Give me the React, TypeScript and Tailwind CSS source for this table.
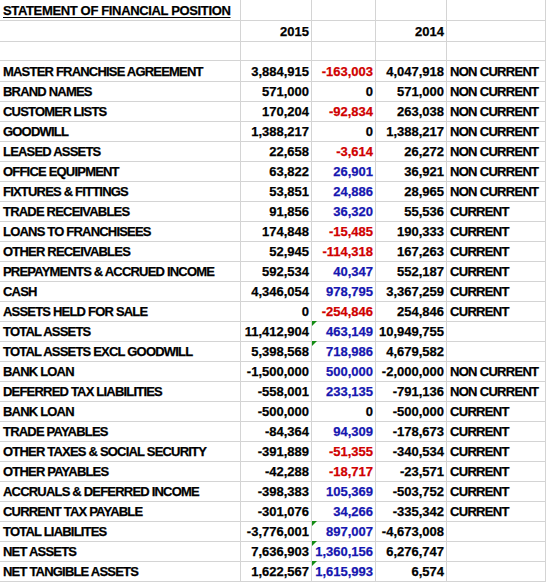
import React from 'react';

type Row = {
  label: string;
  y2015: string;
  diff: string;
  y2014: string;
  kind?: string;
  flag?: boolean;
};

const rows: Row[] = [
  { label: 'MASTER FRANCHISE AGREEMENT', y2015: '3,884,915', diff: '-163,003', y2014: '4,047,918', kind: 'NON CURRENT' },
  { label: 'BRAND NAMES', y2015: '571,000', diff: '0', y2014: '571,000', kind: 'NON CURRENT' },
  { label: 'CUSTOMER LISTS', y2015: '170,204', diff: '-92,834', y2014: '263,038', kind: 'NON CURRENT' },
  { label: 'GOODWILL', y2015: '1,388,217', diff: '0', y2014: '1,388,217', kind: 'NON CURRENT' },
  { label: 'LEASED ASSETS', y2015: '22,658', diff: '-3,614', y2014: '26,272', kind: 'NON CURRENT' },
  { label: 'OFFICE EQUIPMENT', y2015: '63,822', diff: '26,901', y2014: '36,921', kind: 'NON CURRENT' },
  { label: 'FIXTURES & FITTINGS', y2015: '53,851', diff: '24,886', y2014: '28,965', kind: 'NON CURRENT' },
  { label: 'TRADE RECEIVABLES', y2015: '91,856', diff: '36,320', y2014: '55,536', kind: 'CURRENT' },
  { label: 'LOANS TO FRANCHISEES', y2015: '174,848', diff: '-15,485', y2014: '190,333', kind: 'CURRENT' },
  { label: 'OTHER RECEIVABLES', y2015: '52,945', diff: '-114,318', y2014: '167,263', kind: 'CURRENT' },
  { label: 'PREPAYMENTS & ACCRUED INCOME', y2015: '592,534', diff: '40,347', y2014: '552,187', kind: 'CURRENT' },
  { label: 'CASH', y2015: '4,346,054', diff: '978,795', y2014: '3,367,259', kind: 'CURRENT' },
  { label: 'ASSETS HELD FOR SALE', y2015: '0', diff: '-254,846', y2014: '254,846', kind: 'CURRENT' },
  { label: 'TOTAL ASSETS', y2015: '11,412,904', diff: '463,149', y2014: '10,949,755', flag: true },
  { label: 'TOTAL ASSETS EXCL GOODWILL', y2015: '5,398,568', diff: '718,986', y2014: '4,679,582', flag: true },
  { label: 'BANK LOAN', y2015: '-1,500,000', diff: '500,000', y2014: '-2,000,000', kind: 'NON CURRENT' },
  { label: 'DEFERRED TAX LIABILITIES', y2015: '-558,001', diff: '233,135', y2014: '-791,136', kind: 'NON CURRENT' },
  { label: 'BANK LOAN', y2015: '-500,000', diff: '0', y2014: '-500,000', kind: 'CURRENT' },
  { label: 'TRADE PAYABLES', y2015: '-84,364', diff: '94,309', y2014: '-178,673', kind: 'CURRENT' },
  { label: 'OTHER TAXES & SOCIAL SECURITY', y2015: '-391,889', diff: '-51,355', y2014: '-340,534', kind: 'CURRENT' },
  { label: 'OTHER PAYABLES', y2015: '-42,288', diff: '-18,717', y2014: '-23,571', kind: 'CURRENT' },
  { label: 'ACCRUALS & DEFERRED INCOME', y2015: '-398,383', diff: '105,369', y2014: '-503,752', kind: 'CURRENT' },
  { label: 'CURRENT TAX PAYABLE', y2015: '-301,076', diff: '34,266', y2014: '-335,342', kind: 'CURRENT' },
  { label: 'TOTAL LIABILITES', y2015: '-3,776,001', diff: '897,007', y2014: '-4,673,008', flag: true },
  { label: 'NET ASSETS', y2015: '7,636,903', diff: '1,360,156', y2014: '6,276,747', flag: true },
  { label: 'NET TANGIBLE ASSETS', y2015: '1,622,567', diff: '1,615,993', y2014: '6,574', flag: true },
];

const cols = 'grid grid-cols-[241px_71px_64px_71px_99px]';
const cell = 'h-full border-r border-b border-[#d4d4d4] whitespace-nowrap overflow-visible leading-[19px] pt-[1px]';
const label = 'pl-[3px] tracking-[-0.8px]';
const num = 'text-right pr-[2px]';

function diffColor(v: string) {
  if (v === '0') return 'text-black';
  return v.startsWith('-') ? 'text-[#d00000]' : 'text-[#1616b0]';
}

function ErrorMark() {
  // excel's little green "inconsistent formula" corner
  return (
    <svg className="absolute left-0 top-0" width="5" height="5" viewBox="0 0 5 5">
      <polygon points="0,0 5,0 0,5" fill="#148c14" />
    </svg>
  );
}

export default function App() {
  return (
    <div
      className="w-[546px] h-[582px] bg-white text-black font-bold text-[13px] [-webkit-text-stroke:0.25px_currentColor]"
      style={{ fontFamily: '"Liberation Sans", Arial, sans-serif' }}
    >
      <div className={`${cols} h-[21px]`}>
        <div className={`${cell} pl-[3px] tracking-[-0.35px] leading-[19px]`}>
          <span className="underline underline-offset-[2px] decoration-[1px]">STATEMENT OF FINANCIAL POSITION</span>
        </div>
        <div className={cell} />
        <div className={cell} />
        <div className={cell} />
        <div className={cell} />
      </div>
      <div className={`${cols} h-[20px]`}>
        <div className={cell} />
        <div className={`${cell} ${num}`}>2015</div>
        <div className={cell} />
        <div className={`${cell} ${num}`}>2014</div>
        <div className={cell} />
      </div>
      <div className={`${cols} h-[20px]`}>
        <div className={cell} />
        <div className={cell} />
        <div className={cell} />
        <div className={cell} />
        <div className={cell} />
      </div>
      {rows.map((r, i) => (
        <div key={i} className={`${cols} h-[20px]`}>
          <div className={`${cell} ${label}`}>{r.label}</div>
          <div className={`${cell} ${num} flex justify-end`}>{r.y2015}</div>
          <div className={`${cell} ${num} relative ${diffColor(r.diff)}`}>
            {r.flag && <ErrorMark />}
            {r.diff}
          </div>
          <div className={`${cell} ${num} flex justify-end`}>{r.y2014}</div>
          <div className={`${cell} pl-[3px] tracking-[-0.7px]`}>{r.kind ?? ''}</div>
        </div>
      ))}
    </div>
  );
}
